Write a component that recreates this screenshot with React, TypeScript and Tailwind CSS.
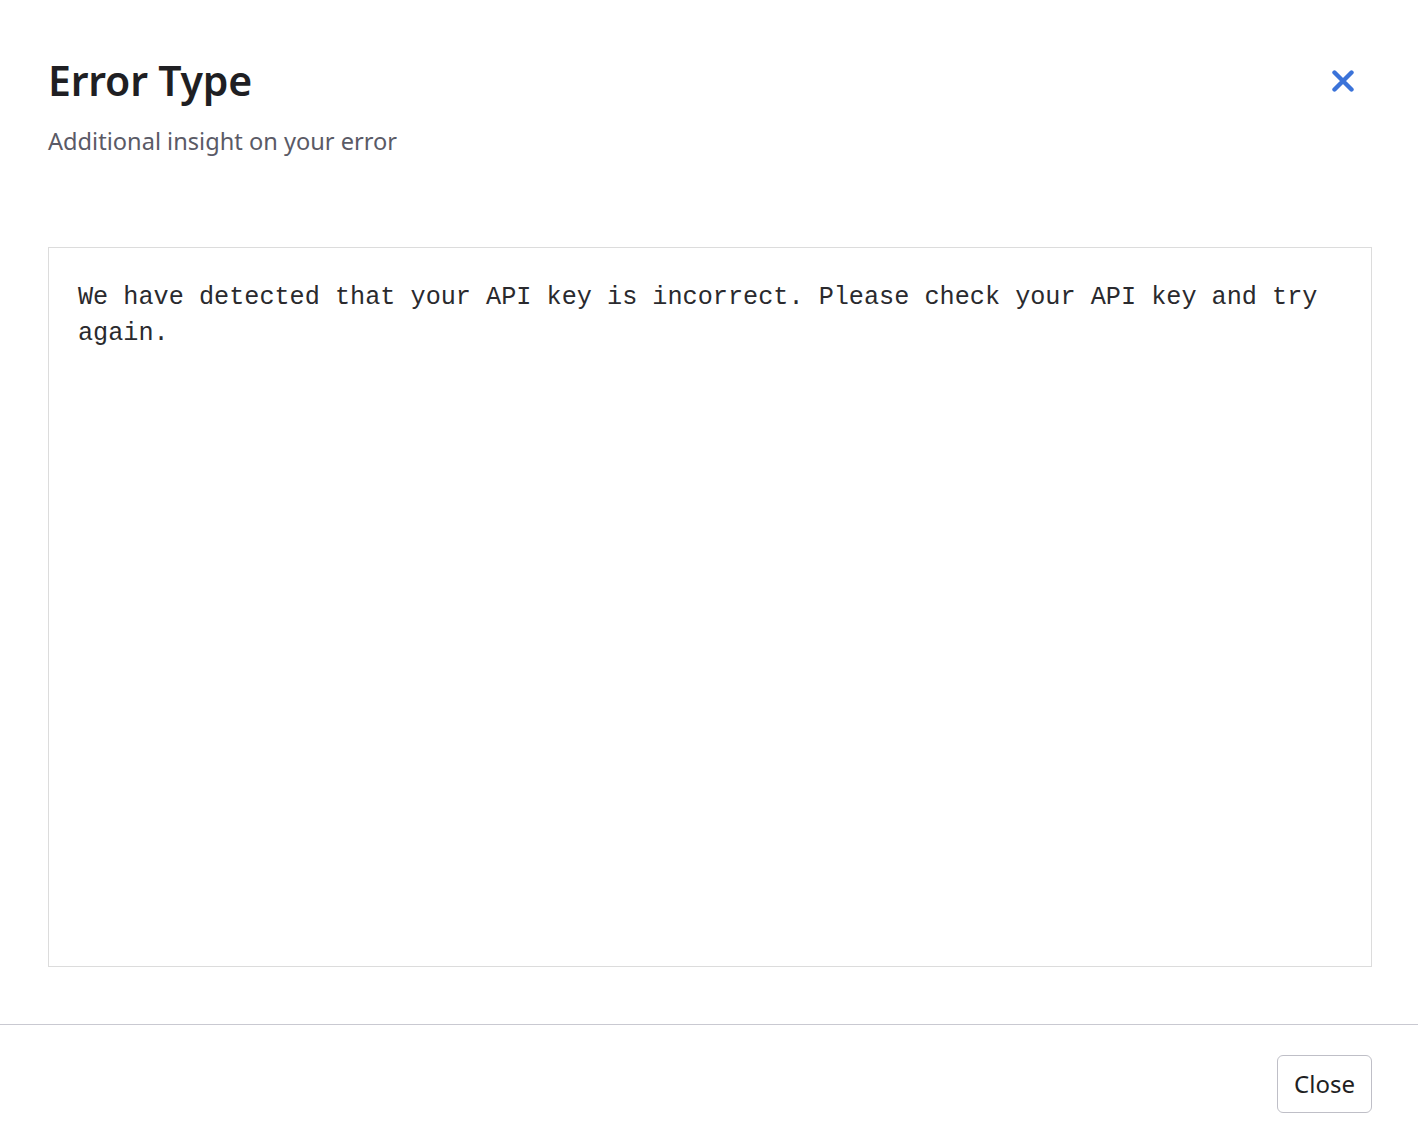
import React from "react";

export default function App() {
  return (
    <div className="w-[1418px] h-[1140px] bg-white flex flex-col" style={{ fontFamily: '"Noto Sans", Inter, sans-serif' }}>
      <div className="pl-[48px] pr-[64px] pt-[52px] flex justify-between items-start">
        <div>
          <h1 className="text-[41px] leading-[56px] font-semibold text-[#1f1f23] tracking-[-0.2px]">Error Type</h1>
          <p className="mt-[17px] text-[23.6px] leading-[32px] text-[#5a5a66]">Additional insight on your error</p>
        </div>
        <button className="mt-[18px] w-[22px] h-[22px] flex items-center justify-center">
          <svg width="22" height="22" viewBox="0 0 22 22" fill="none" stroke="#3b73d9" strokeWidth="4.4" strokeLinecap="round">
            <path d="M2.5 2.5L19.5 19.5M19.5 2.5L2.5 19.5" />
          </svg>
        </button>
      </div>
      <div className="pl-[48px] pr-[46px] mt-[90px]">
        <div className="h-[720px] border border-[#dcdcdc] px-[29px] pt-[32px] pb-[28px]">
          <p className="text-[25.2px] leading-[36px] text-[#2a2a2e]" style={{ fontFamily: '"Liberation Mono", monospace' }}>
            We have detected that your API key is incorrect. Please check your API key and try again.
          </p>
        </div>
      </div>
      <div className="mt-[57px] border-t border-[#c9c9d1]" />
      <div className="flex justify-end px-[46px] pt-[30px]">
        <button className="h-[58px] px-[16px] border border-[#bfbfc7] rounded-[6px] text-[24px] text-[#1f1f23]">Close</button>
      </div>
    </div>
  );
}
